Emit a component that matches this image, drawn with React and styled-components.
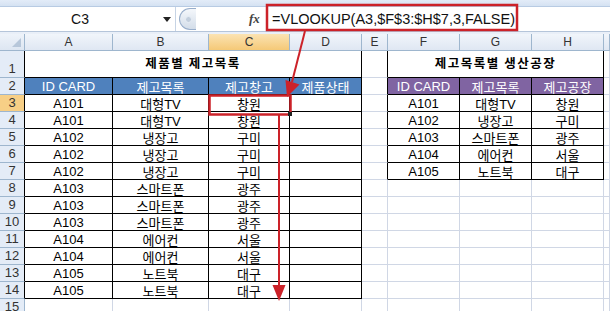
import React from "react";
import styled, { createGlobalStyle } from "styled-components";

const GlobalStyle = createGlobalStyle`
  html, body { margin: 0; padding: 0; background: #fff; }
  body {
    width: 610px;
    height: 311px;
    overflow: hidden;
    font-family: "Liberation Sans", "Noto Sans CJK KR", sans-serif;
  }
`;

const RED = "#cc2229";
const GRID = "#d0d7e5";
const HEAD_LINE = "#9eb6ce";

const table1 = [
  ["A101", "대형TV", "창원"],
  ["A101", "대형TV", "창원"],
  ["A102", "냉장고", "구미"],
  ["A102", "냉장고", "구미"],
  ["A102", "냉장고", "구미"],
  ["A103", "스마트폰", "광주"],
  ["A103", "스마트폰", "광주"],
  ["A103", "스마트폰", "광주"],
  ["A104", "에어컨", "서울"],
  ["A104", "에어컨", "서울"],
  ["A105", "노트북", "대구"],
  ["A105", "노트북", "대구"],
];

const table2 = [
  ["A101", "대형TV", "창원"],
  ["A102", "냉장고", "구미"],
  ["A103", "스마트폰", "광주"],
  ["A104", "에어컨", "서울"],
  ["A105", "노트북", "대구"],
];

const head1 = ["ID CARD", "제고목록", "제고창고", "제품상태"];
const head2 = ["ID CARD", "제고목록", "제고공장"];
const letters = ["A", "B", "C", "D", "E", "F", "G", "H", ""];

const Page = styled.div`
  position: relative;
  width: 610px;
  height: 311px;
  overflow: hidden;
`;

const RibbonEdge = styled.div`
  height: 6px;
  background: linear-gradient(#e3ecf8, #d5e2f2);
  border-bottom: 1px solid #b8cbe3;
`;

const FormulaBar = styled.div`
  display: flex;
  align-items: stretch;
  height: 24px;
  background: #fff;
  border-bottom: 1px solid #b5c5da;
`;

const NameBox = styled.div`
  width: 175px;
  display: flex;
  align-items: center;
  border-right: 1px solid #c7d4e5;
  font-size: 14px;
  color: #111;
`;

const NameText = styled.span`
  width: 160px;
  text-align: center;
`;

const DropArrow = styled.span`
  width: 0;
  height: 0;
  border-left: 4px solid transparent;
  border-right: 4px solid transparent;
  border-top: 5px solid #222;
  margin-left: 3px;
`;

const Splitter = styled.div`
  width: 70px;
  display: flex;
  align-items: center;
  padding-left: 3px;
`;

const Knob = styled.div`
  width: 16px;
  height: 20px;
  border: 1px solid #98aecb;
  border-right: none;
  border-radius: 11px 0 0 11px;
  background: linear-gradient(#f4f7fb, #d3dde9);
  display: flex;
  align-items: center;
  justify-content: center;

  &::after {
    content: "";
    width: 5px;
    height: 5px;
    border-radius: 50%;
    background: #c3cfdd;
    border: 1px solid #e8eef6;
  }
`;

const Fx = styled.div`
  width: 18px;
  display: flex;
  align-items: center;
  font-family: "Liberation Serif", serif;
  font-style: italic;
  font-weight: 700;
  font-size: 13px;
  color: #444;
`;

const FormulaInput = styled.div`
  flex: 1;
  display: flex;
  align-items: center;
  padding-left: 4px;
  border-left: 1px solid #c7d4e5;
  font-size: 14.5px;
  color: #111;
`;

const Gap = styled.div`
  height: 2px;
  background: #e9eff8;
`;

const Sheet = styled.div`
  display: grid;
  grid-template-columns: 25px 88px 96px 81px 72px 26px 72px 72px 72px 1fr;
  grid-template-rows: 17px 27px repeat(14, 17px);
`;

const Corner = styled.div`
  position: relative;
  box-sizing: border-box;
  background: linear-gradient(#eef3fa, #dde6f2);
  border-right: 1px solid ${HEAD_LINE};
  border-bottom: 1px solid ${HEAD_LINE};

  &::after {
    content: "";
    position: absolute;
    right: 3px;
    bottom: 3px;
    border-left: 9px solid transparent;
    border-bottom: 9px solid #b7c7da;
  }
`;

const ColHead = styled.div`
  box-sizing: border-box;
  display: flex;
  align-items: center;
  justify-content: center;
  font-size: 12px;
  color: #333;
  background: ${(p) =>
    p.$active
      ? "linear-gradient(#fbe3b3, #f5c977)"
      : "linear-gradient(#f1f5fb, #dfe7f3)"};
  border-right: 1px solid ${HEAD_LINE};
  border-bottom: 1px solid ${HEAD_LINE};
`;

const RowHead = styled.div`
  box-sizing: border-box;
  display: flex;
  align-items: flex-end;
  justify-content: center;
  padding-bottom: 1px;
  font-size: 13px;
  color: #333;
  background: ${(p) => (p.$active ? "#f7cf86" : "#e4ecf7")};
  border-right: 1px solid ${(p) => (p.$edge ? "#000" : HEAD_LINE)};
  border-bottom: 1px solid ${HEAD_LINE};
`;

const Cell = styled.div`
  box-sizing: border-box;
  display: flex;
  align-items: center;
  justify-content: center;
  font-size: 13px;
  color: ${(p) => (p.$fill ? "#fff" : "#000")};
  background: ${(p) => p.$fill || "#fff"};
  border-right: 1px solid ${(p) => (p.$r ? "#000" : GRID)};
  border-bottom: 1px solid ${(p) => (p.$b ? "#000" : GRID)};
  white-space: nowrap;
  overflow: hidden;
`;

const Title = styled(Cell)`
  grid-column: span ${(p) => p.$span};
  align-items: flex-end;
  padding-bottom: 5px;
  font-family: "Noto Sans CJK KR", sans-serif;
  font-weight: 700;
  font-size: 12.5px;
  letter-spacing: 1.5px;
`;

const Overlay = styled.svg`
  position: absolute;
  left: 0;
  top: 0;
  pointer-events: none;
`;

function borders(row, col) {
  const inT1 = row >= 1 && row <= 14 && col <= 3;
  const inT2 = row >= 1 && row <= 7 && col >= 5 && col <= 7;
  return {
    $r: inT1 || inT2 || (col === 4 && row <= 7),
    $b: inT1 || inT2,
  };
}

function valueAt(row, col) {
  if (row === 2) {
    if (col <= 3) return { text: head1[col], fill: "#4f81bd" };
    if (col >= 5 && col <= 7) return { text: head2[col - 5], fill: "#8064a2" };
    return {};
  }
  if (row >= 3 && row <= 14 && col <= 2) return { text: table1[row - 3][col] };
  if (row >= 3 && row <= 7 && col >= 5 && col <= 7)
    return { text: table2[row - 3][col - 5] };
  return {};
}

function SheetRow({ row }) {
  const cells = [];
  if (row === 1) {
    cells.push(
      <Title key="t1" $span={4} {...borders(1, 0)}>
        제품별 제고목록
      </Title>
    );
    cells.push(<Cell key="e" {...borders(1, 4)} />);
    cells.push(
      <Title key="t2" $span={3} {...borders(1, 5)}>
        제고목록별 생산공장
      </Title>
    );
    cells.push(<Cell key="i" {...borders(1, 8)} />);
  } else {
    for (let col = 0; col < 9; col++) {
      const v = valueAt(row, col);
      cells.push(
        <Cell key={col} $fill={v.fill} {...borders(row, col)}>
          {v.text}
        </Cell>
      );
    }
  }
  return (
    <>
      <RowHead $active={row === 3} $edge={row <= 14}>
        {row}
      </RowHead>
      {cells}
    </>
  );
}

export default function App() {
  const rows = Array.from({ length: 15 }, (_, i) => i + 1);
  return (
    <Page>
      <GlobalStyle />
      <RibbonEdge />
      <FormulaBar>
        <NameBox>
          <NameText>C3</NameText>
          <DropArrow />
        </NameBox>
        <Splitter>
          <Knob />
        </Splitter>
        <Fx>fx</Fx>
        <FormulaInput>=VLOOKUP(A3,$F$3:$H$7,3,FALSE)</FormulaInput>
      </FormulaBar>
      <Gap />
      <Sheet>
        <Corner />
        {letters.map((l, i) => (
          <ColHead key={i} $active={l === "C"}>
            {l}
          </ColHead>
        ))}
        {rows.map((r) => (
          <SheetRow key={r} row={r} />
        ))}
      </Sheet>
      <Overlay width="610" height="311" viewBox="0 0 610 311">
        <rect x="267" y="5" width="250" height="25" fill="none" stroke={RED} strokeWidth="2.5" />
        <line x1="305" y1="31" x2="292" y2="82" stroke={RED} strokeWidth="2" />
        <polygon points="285.5,80 299.5,84.5 287,97" fill={RED} />
        <rect x="209.5" y="95.5" width="81" height="19" fill="none" stroke={RED} strokeWidth="2.5" />
        <rect x="288" y="112" width="4" height="4" fill="#222" />
        <line x1="279" y1="115" x2="279" y2="287" stroke={RED} strokeWidth="2" />
        <polygon points="272.5,285 285.5,285 279,301" fill={RED} />
      </Overlay>
    </Page>
  );
}
